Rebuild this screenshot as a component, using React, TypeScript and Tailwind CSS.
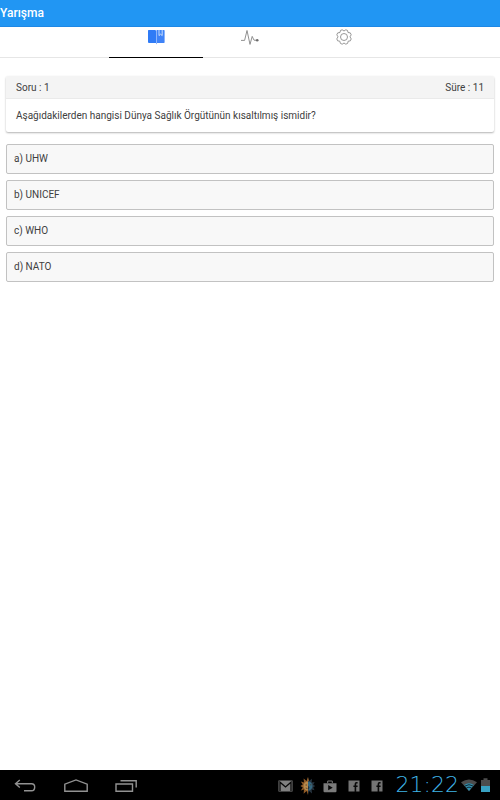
import React, { useState } from "react";

function BookIcon() {
  return (
    <svg width="18" height="16" viewBox="0 0 18 16" aria-hidden="true">
      <path d="M1.5 1H8L9 1.5V14L8 14H2L1 13.5V1.5Z" fill="#2f7bf6" />
      <path d="M10 1H17L17.6 1.5V13.5L17 14H10Z" fill="#3f83f7" />
      <path d="M9 1.2H10V14.6L9.5 15.4L9 14.6Z" fill="#8db5fa" />
      <path d="M12 1V6.6L13.6 5.2L15.2 6.6V1" fill="#3f86f7" stroke="#d5e4fc" strokeWidth=".9" />
    </svg>
  );
}

function PulseIcon() {
  return (
    <svg width="20" height="16" viewBox="0 0 20 16" fill="none" aria-hidden="true">
      <path d="M1 11.4H4.6L7 1.5L10 15.4L12.2 7.4L14 11.2H16" stroke="#858585" strokeWidth=".9" strokeLinejoin="round" />
      <circle cx="17.2" cy="11.3" r="1.3" fill="#6c6c6c" />
    </svg>
  );
}

function GearIcon() {
  return (
    <svg width="16" height="16" viewBox="0 0 16 16" fill="none" stroke="#8c8c8c" strokeWidth=".9" strokeLinejoin="round" aria-hidden="true">
      <path d="M6.2 .8L8 2L9.8 .8L11.5 1.4L12 3.5L14.3 3.9L15.2 5.8L14 7.8L15.2 9.9L14.4 11.8L12.2 12.2L11.6 14.4L9.8 15.2L8 14L6.2 15.2L4.4 14.4L3.8 12.2L1.6 11.8L.8 9.9L2 7.8L.8 5.8L1.7 3.9L4 3.5L4.5 1.4Z" />
      <circle cx="8" cy="8" r="3.5" />
    </svg>
  );
}

function SunIcon() {
  return (
    <svg width="16" height="20" viewBox="0 0 16 20" aria-hidden="true">
      <path d="M8 1L6.6 5L3.6 2.4L4 6.4L.8 5.6L2.8 8.6L.4 10L2.8 11.4L.8 14.4L4 13.6L3.6 17.8L6.6 15L8 19Z" fill="#8f5a26" />
      <path d="M8 1L9 5L12 2.8L11.7 6.4L14.6 6L13.2 8.7L15.2 10L13.2 11.6L14.6 14.2L11.7 13.6L12 17.4L9 15L8 19Z" fill="#26333e" />
      <path d="M8 1L7.4 5H8.8Z" fill="#a5682a" />
      <path d="M8 5.5A4.5 4.5 0 0 0 8 14.5Z" fill="#b98a4c" />
      <path d="M8 5.5A4.5 4.5 0 0 1 8 14.5L9.4 11.5L8 9.5Z" fill="#35677f" />
      <path d="M5.5 9H7M5.7 12L7.5 12.6M10 8.8H11.5" stroke="#4a3828" strokeWidth=".8" />
    </svg>
  );
}

function FacebookIcon() {
  return (
    <svg width="12" height="12" viewBox="0 0 12 12" aria-hidden="true">
      <rect x=".5" y=".5" width="11" height="11" fill="#747474" />
      <path d="M9.6 2.8H8.5Q7.4 2.8 7.4 4V12M5.4 6.2H9.6" stroke="#080808" strokeWidth="1.6" fill="none" />
    </svg>
  );
}

const tabs = [
  { label: "Sorular", icon: <BookIcon /> },
  { label: "İstatistik", icon: <PulseIcon /> },
  { label: "Ayarlar", icon: <GearIcon /> },
];

const options = ["a) UHW", "b) UNICEF", "c) WHO", "d) NATO"];

function SystemBar() {
  return (
    <footer className="flex h-[30px] items-center justify-between bg-black pr-[10px] pl-[14px]">
      <nav className="flex items-center gap-[27px] pt-[2px]">
        <button type="button" aria-label="Geri">
          <svg className="block" width="23" height="14" viewBox="0 0 23 14" fill="none" stroke="#929292" strokeWidth="1.4" aria-hidden="true">
            <path d="M5.8 1L1.5 4.8L5.8 8.6M1.5 4.8H17.5Q20.7 4.8 20.7 8Q20.7 11.8 17.5 11.8H10" />
          </svg>
        </button>
        <button type="button" aria-label="Ana ekran">
          <svg className="block" width="24" height="14" viewBox="0 0 24 14" fill="none" stroke="#929292" strokeWidth="1.4" aria-hidden="true">
            <path d="M.8 12.3V5.2L12 .9L23.2 5.2V12.3Z" />
          </svg>
        </button>
        <button type="button" aria-label="Son uygulamalar">
          <svg className="block" width="23" height="14" viewBox="0 0 23 14" fill="none" stroke="#929292" strokeWidth="1.4" aria-hidden="true">
            <path d="M1 5H17.5V12.2H1ZM5.5 1.7H21.2V8.5" />
          </svg>
        </button>
      </nav>
      <div className="flex items-center">
        <div className="flex items-center gap-[11px] pt-[2px] pr-[13px]">
          <svg width="15" height="12" viewBox="0 0 15 12" aria-hidden="true">
            <rect x=".5" y=".5" width="14" height="11" fill="#808080" />
            <path d="M2 11V2.2L7.5 7L13 2.2V11" stroke="#080808" strokeWidth="1.3" fill="none" />
          </svg>
          <div className="-mx-1">
            <SunIcon />
          </div>
          <svg width="14" height="13" viewBox="0 0 14 13" aria-hidden="true">
            <path d="M.5 3.3H13.5V11.5L12.7 12.3H1.3L.5 11.5Z" fill="#7b7b7b" />
            <path d="M4.7 3V1H9.3V3" stroke="#7b7b7b" strokeWidth="1" fill="none" />
            <path d="M5.2 5.1L9.7 7.7L5.2 10.3Z" fill="#080808" />
          </svg>
          <FacebookIcon />
          <FacebookIcon />
        </div>
        <time className="font-['DejaVu_Sans_Light','DejaVu_Sans',sans-serif] text-[22px] leading-6 font-extralight text-[#3fb4e6]">
          21:22
        </time>
        <svg className="ml-[2px]" width="16" height="12" viewBox="0 0 16 12" aria-hidden="true">
          <path d="M0 3.2Q8-2.4 16 3.2L8 12Z" fill="#4c4c4c" />
          <path d="M3.2 6Q8 2.6 12.8 6L8 12Z" fill="#318fae" />
          <path d="M3.8 7.1Q8 4.3 12.2 7.1M5.4 9Q8 7.2 10.6 9" stroke="#071015" strokeWidth=".8" fill="none" />
        </svg>
        <svg className="ml-1" width="9" height="14" viewBox="0 0 9 14" aria-hidden="true">
          <path d="M0 2H2.5V.3H6.5V2H9V14H0Z" fill="#4c4c4c" />
          <path d="M0 8H9V14H0Z" fill="#38a1c2" />
        </svg>
      </div>
    </footer>
  );
}

export default function App() {
  const [active, setActive] = useState(0);

  return (
    <div className="flex min-h-screen flex-col bg-white font-[Roboto,sans-serif] text-[10px] leading-4 text-[#404040]">
      <header className="h-[27px] border-b border-[#1e88e5] bg-[#2196f3]">
        <h1 className="text-xs leading-[27px] font-medium text-white">Yarışma</h1>
      </header>

      <nav className="flex h-[31px] justify-center border-b border-[#e6e6e6]">
        {tabs.map((tab, i) => (
          <button
            key={tab.label}
            type="button"
            aria-label={tab.label}
            onClick={() => setActive(i)}
            className={`flex h-[31px] w-[94px] items-start justify-center border-b pt-[2px] ${
              i === active ? "border-black" : "border-transparent"
            }`}
          >
            {tab.icon}
          </button>
        ))}
      </nav>

      <main className="flex-1 px-[6px] pt-[18px]">
        <section className="rounded-xs bg-white shadow-[0_1px_2px_rgba(0,0,0,0.3)]">
          <div className="flex justify-between rounded-t-xs border-b border-[#eaeaea] bg-[#f4f4f4] px-[10px] pt-1 pb-[2px]">
            <span>Soru : 1</span>
            <span>Süre : 11</span>
          </div>
          <p className="px-[10px] pt-[9px] pb-2">
            Aşağıdakilerden hangisi Dünya Sağlık Örgütünün kısaltılmış ismidir?
          </p>
        </section>

        <div className="mt-3 flex flex-col gap-[6px]">
          {options.map((option) => (
            <button
              key={option}
              type="button"
              className="h-[30px] rounded-xs border border-[#c2c2c2] bg-[#f8f8f8] px-[7px] text-left"
            >
              {option}
            </button>
          ))}
        </div>
      </main>

      <SystemBar />
    </div>
  );
}
